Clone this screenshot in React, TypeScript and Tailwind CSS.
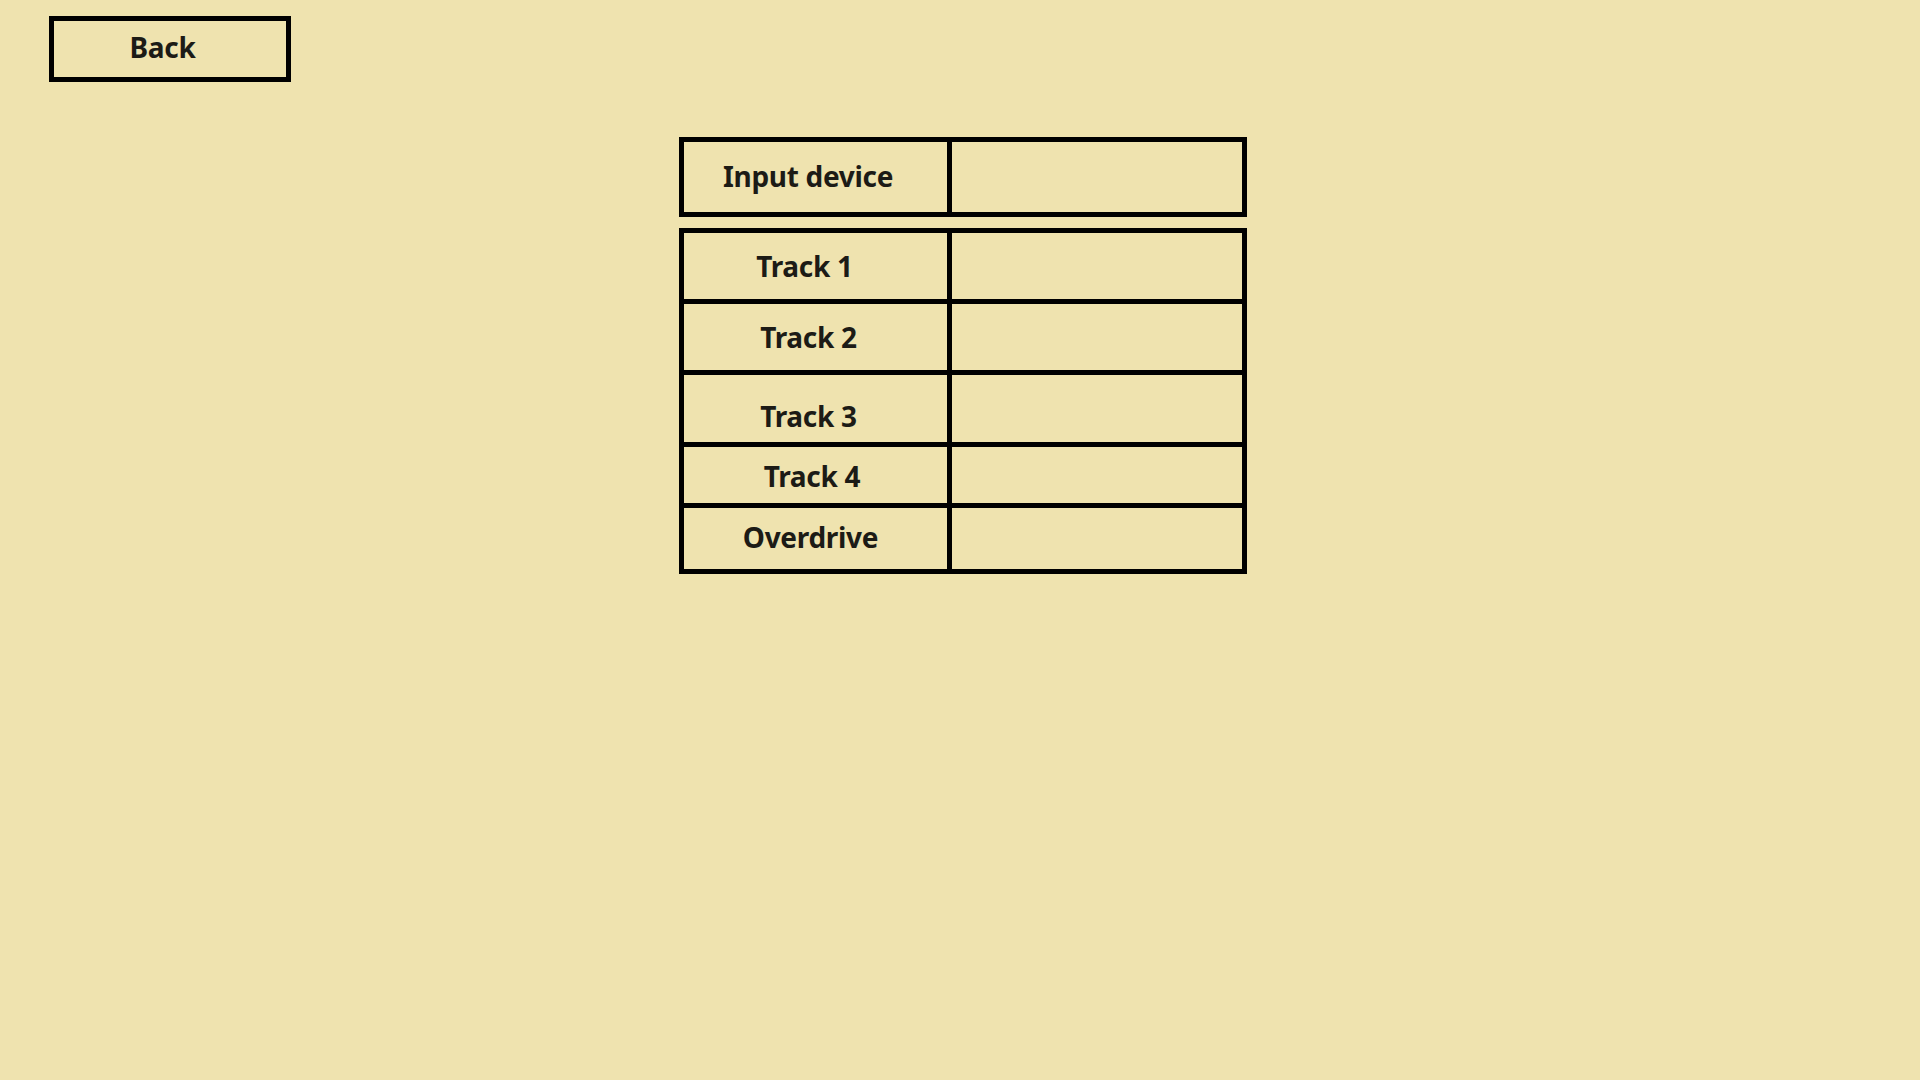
const rows = [
  { label: "Track 1", h: "h-[66px]", text: "pr-[22px]", shift: "" },
  { label: "Track 2", h: "h-[71px]", text: "pr-[14px]", shift: "" },
  { label: "Track 3", h: "h-[72px]", text: "pr-[14px]", shift: "pt-[14px]" },
  { label: "Track 4", h: "h-[61px]", text: "pr-[7px]", shift: "pt-[2px]" },
  { label: "Overdrive", h: "h-[66px]", text: "pr-[10px]", shift: "pb-[4px]" },
];

export default function App() {
  return (
    <div
      className="min-h-screen w-full bg-[#efe3af] text-[#1c1b16] pl-[49px] pt-[16px]"
      style={{ fontFamily: '"Noto Sans", "Open Sans", sans-serif' }}
    >
      {/* Back */}
      <button className="w-[242px] h-[66px] border-[5px] border-black flex items-center justify-center pr-[15px] pb-[5px] text-[28px] tracking-[-0.3px] font-bold leading-none">
        Back
      </button>

      <div className="ml-[630px] mt-[55px] w-[568px] flex flex-col gap-[11px]">
        {/* Input device */}
        <div className="border-[5px] border-black flex h-[80px]">
          <div className="w-[268px] border-r-[5px] border-black flex items-center justify-center pr-[15px] pb-[3px] text-[28px] tracking-[-0.3px] font-bold leading-none">
            Input device
          </div>
          <div className="flex-1" />
        </div>

        {/* Tracks */}
        <div className="border-[5px] border-black flex flex-col">
          {rows.map((r, i) => (
            <div key={r.label} className={`flex ${r.h} ${i > 0 ? "border-t-[5px] border-black" : ""}`}>
              <div className={`w-[268px] border-r-[5px] border-black flex items-center justify-center text-[28px] tracking-[-0.3px] font-bold leading-none ${r.text} ${r.shift}`}>
                {r.label}
              </div>
              <div className="flex-1" />
            </div>
          ))}
        </div>
      </div>
    </div>
  );
}
